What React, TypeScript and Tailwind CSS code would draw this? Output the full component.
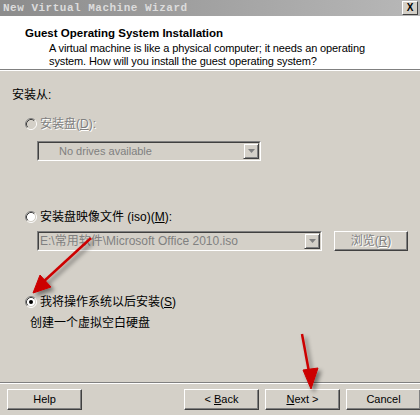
import React from 'react';

const cjk = '"Liberation Sans", "Noto Sans CJK SC", sans-serif';

function Radio({ checked, disabled }: { checked?: boolean; disabled?: boolean }) {
  return (
    <svg width="12" height="12" viewBox="0 0 12 12" className="shrink-0">
      <circle cx="6" cy="6" r="4.5" fill={disabled ? '#d4d0c8' : '#ffffff'} />
      <path d="M2.11 9.89 A5.5 5.5 0 0 1 9.89 2.11" fill="none" stroke="#808080" strokeWidth="1" />
      <path d="M9.89 2.11 A5.5 5.5 0 0 1 2.11 9.89" fill="none" stroke="#ffffff" strokeWidth="1" />
      <path d="M2.82 9.18 A4.5 4.5 0 0 1 9.18 2.82" fill="none" stroke="#404040" strokeWidth="1" />
      <path d="M9.18 2.82 A4.5 4.5 0 0 1 2.82 9.18" fill="none" stroke="#d4d0c8" strokeWidth="1" />
      {checked && <circle cx="6" cy="6" r="2" fill="#000" />}
    </svg>
  );
}

function ArrowBtn() {
  return (
    <div className="w-[16px] h-[16px] bg-[#d4d0c8] border border-t-[#d4d0c8] border-l-[#d4d0c8] border-b-[#404040] border-r-[#404040] flex items-center justify-center shadow-[inset_1px_1px_0_#fff,inset_-1px_-1px_0_#808080]">
      <svg width="7" height="4" viewBox="0 0 7 4">
        <path d="M0 0 H7 L3.5 4 Z" fill="#808080" />
      </svg>
    </div>
  );
}

function Button({ children, className = '' }: { children: React.ReactNode; className?: string }) {
  return (
    <div
      className={`h-[21px] w-[75px] bg-[#d4d0c8] border border-t-white border-l-white border-b-[#404040] border-r-[#404040] shadow-[inset_-1px_-1px_0_#808080] flex items-center justify-center text-[11px] text-black ${className}`}
    >
      <span className="whitespace-pre">{children}</span>
    </div>
  );
}

export default function App() {
  return (
    <div
      className="relative w-[420px] h-[415px] bg-[#d4d0c8] flex flex-col overflow-hidden"
      style={{ fontFamily: cjk }}
    >
      {/* title bar */}
      <div className="h-[16px] bg-gradient-to-r from-[#8c8c8c] to-[#b8b8b8] flex items-center pl-[3px] pr-[2px]">
        <span className="flex-1 text-[11px] font-bold text-[#dcdcdc] tracking-[0.5px]" style={{ fontFamily: '"Liberation Mono", monospace' }}>
          New Virtual Machine Wizard
        </span>
        <div className="w-[16px] h-[14px] bg-[#d4d0c8] border-t border-l border-white border-b border-r border-b-[#404040] border-r-[#404040] flex items-center justify-center text-[10px] font-bold leading-none">
          X
        </div>
      </div>

      {/* header */}
      <div className="h-[53px] bg-white pt-[10px] text-[11px] leading-[13px] text-black" style={{ fontFamily: '"Liberation Sans", sans-serif' }}>
        <div className="pl-[25px] font-bold text-[11.5px] leading-[14px]">Guest Operating System Installation</div>
        <div className="pl-[49px] pt-[2px] tracking-[-0.12px]">
          A virtual machine is like a physical computer; it needs an operating
          <br />
          system. How will you install the guest operating system?
        </div>
      </div>
      <div className="h-[1px] bg-[#808080]" />
      <div className="h-[1px] bg-white" />

      {/* body */}
      <div className="flex-1 px-[12px] text-[12px] text-black">
        <div className="pt-[16px] leading-[16px]">安装从:</div>

        <div className="mt-[13px] pl-[13px] flex items-center gap-[3px] h-[16px]">
          <Radio disabled />
          <span className="text-[#808080] [text-shadow:1px_1px_0_#fff]">
            安装盘(<span className="underline">D</span>):
          </span>
        </div>

        <div className="mt-[9px] ml-[25px] w-[224px] h-[20px] border border-t-[#808080] border-l-[#808080] border-b-white border-r-white">
          <div className="h-full border border-t-[#404040] border-l-[#404040] border-b-[#d4d0c8] border-r-[#d4d0c8] flex items-center">
            <span className="flex-1 pl-[20px] text-[11px] text-[#808080]" style={{ fontFamily: '"Liberation Sans", sans-serif' }}>
              No drives available
            </span>
            <ArrowBtn />
          </div>
        </div>

        <div className="mt-[48px] pl-[13px] flex items-center gap-[3px] h-[16px]">
          <Radio />
          <span>
            安装盘映像文件 (iso)(<span className="underline">M</span>):
          </span>
        </div>

        <div className="mt-[6px] flex items-center">
          <div className="ml-[25px] w-[285px] h-[20px] border border-t-[#808080] border-l-[#808080] border-b-white border-r-white">
            <div className="h-full border border-t-[#404040] border-l-[#404040] border-b-[#d4d0c8] border-r-[#d4d0c8] flex items-center">
              <span className="flex-1 pl-[1px] text-[12px] text-[#808080] whitespace-nowrap overflow-hidden">
                E:\常用软件\Microsoft Office 2010.iso
              </span>
              <ArrowBtn />
            </div>
          </div>
          <div className="ml-[12px] w-[74px] h-[20px] border border-t-white border-l-white border-b-[#404040] border-r-[#404040] shadow-[inset_-1px_-1px_0_#808080] flex items-center justify-center text-[#808080] [text-shadow:1px_1px_0_#fff]">
            浏览(<span className="underline">R</span>)
          </div>
        </div>

        <div className="mt-[43px] pl-[13px] flex items-center gap-[3px] h-[16px]">
          <Radio checked />
          <span>
            我将操作系统以后安装(<span className="underline">S</span>)
          </span>
        </div>

        <div className="mt-[5px] pl-[18px] leading-[16px]">创建一个虚拟空白硬盘</div>
      </div>

      {/* footer */}
      <div className="h-[1px] bg-[#808080]" />
      <div className="h-[1px] bg-white" />
      <div className="h-[31px] flex items-start pt-[5px] pl-[7px]" style={{ fontFamily: '"Liberation Sans", sans-serif' }}>
        <Button>Help</Button>
        <div className="flex-1" />
        <Button>
          {'< '}<span className="underline">B</span>ack
        </Button>
        <Button className="ml-[6px]">
          <span className="underline">N</span>{'ext >'}
        </Button>
        <Button className="ml-[6px] mr-[-1px]">Cancel</Button>
      </div>

      {/* red annotation arrows */}
      <svg className="absolute left-0 top-0 pointer-events-none" width="420" height="415">
        <defs>
          <filter id="sh" x="-20%" y="-20%" width="140%" height="140%">
            <feDropShadow dx="3" dy="3" stdDeviation="2" floodColor="#000" floodOpacity="0.45" />
          </filter>
        </defs>
        <g filter="url(#sh)" fill="#cc0000" stroke="#cc0000">
          <line x1="91" y1="238" x2="42" y2="283" strokeWidth="2.5" />
          <path d="M33 293 L40 275 L51 287 Z" strokeWidth="1" />
          <line x1="302" y1="334" x2="309" y2="372" strokeWidth="2.5" />
          <path d="M311 389 L303 370 L318 368 Z" strokeWidth="1" />
        </g>
      </svg>
    </div>
  );
}
